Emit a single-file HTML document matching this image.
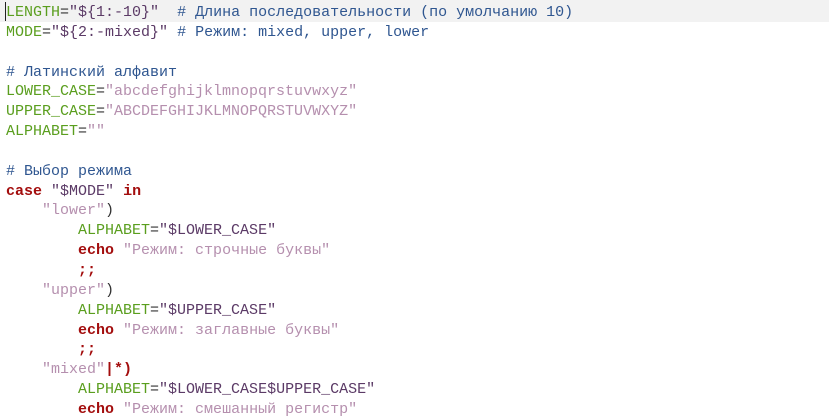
<!DOCTYPE html>
<html><head><meta charset="utf-8"><style>
body{margin:0;width:829px;height:411px;overflow:hidden;background:#fff;font-family:"Liberation Mono","DejaVu Sans Mono",monospace;font-size:15px;}
.c{position:absolute;left:6px;top:3px;}
.l{height:19.85px;line-height:19.85px;white-space:pre;color:#333;}
.hl{position:absolute;left:0;top:0;width:829px;height:22px;background:#f2f2f2;}
.cur{position:absolute;left:5px;top:2px;width:1px;height:19px;background:#222;}
.v{color:#5a9e1e}.s{color:#b58fae}.d{color:#5b3a66}.m{color:#2f5690}.k{color:#a30d0d;font-weight:bold}.p{color:#333}
</style></head><body>
<div class="hl"></div><div class="cur"></div>
<div class="c">
<div class="l"><span class="v">LENGTH</span>=<span class="d">"${1:-10}"</span>  <span class="m"># Длина последовательности (по умолчанию 10)</span></div>
<div class="l"><span class="v">MODE</span>=<span class="d">"${2:-mixed}"</span> <span class="m"># Режим: mixed, upper, lower</span></div>
<div class="l"> </div>
<div class="l"><span class="m"># Латинский алфавит</span></div>
<div class="l"><span class="v">LOWER_CASE</span>=<span class="s">"abcdefghijklmnopqrstuvwxyz"</span></div>
<div class="l"><span class="v">UPPER_CASE</span>=<span class="s">"ABCDEFGHIJKLMNOPQRSTUVWXYZ"</span></div>
<div class="l"><span class="v">ALPHABET</span>=<span class="s">""</span></div>
<div class="l"> </div>
<div class="l"><span class="m"># Выбор режима</span></div>
<div class="l"><span class="k">case</span> <span class="d">"$MODE"</span> <span class="k">in</span></div>
<div class="l">    <span class="s">"lower"</span>)</div>
<div class="l">        <span class="v">ALPHABET</span>=<span class="d">"$LOWER_CASE"</span></div>
<div class="l">        <span class="k">echo</span> <span class="s">"Режим: строчные буквы"</span></div>
<div class="l">        <span class="k">;;</span></div>
<div class="l">    <span class="s">"upper"</span>)</div>
<div class="l">        <span class="v">ALPHABET</span>=<span class="d">"$UPPER_CASE"</span></div>
<div class="l">        <span class="k">echo</span> <span class="s">"Режим: заглавные буквы"</span></div>
<div class="l">        <span class="k">;;</span></div>
<div class="l">    <span class="s">"mixed"</span><span class="k">|*)</span></div>
<div class="l">        <span class="v">ALPHABET</span>=<span class="d">"$LOWER_CASE$UPPER_CASE"</span></div>
<div class="l">        <span class="k">echo</span> <span class="s">"Режим: смешанный регистр"</span></div>
</div>
</body></html>
